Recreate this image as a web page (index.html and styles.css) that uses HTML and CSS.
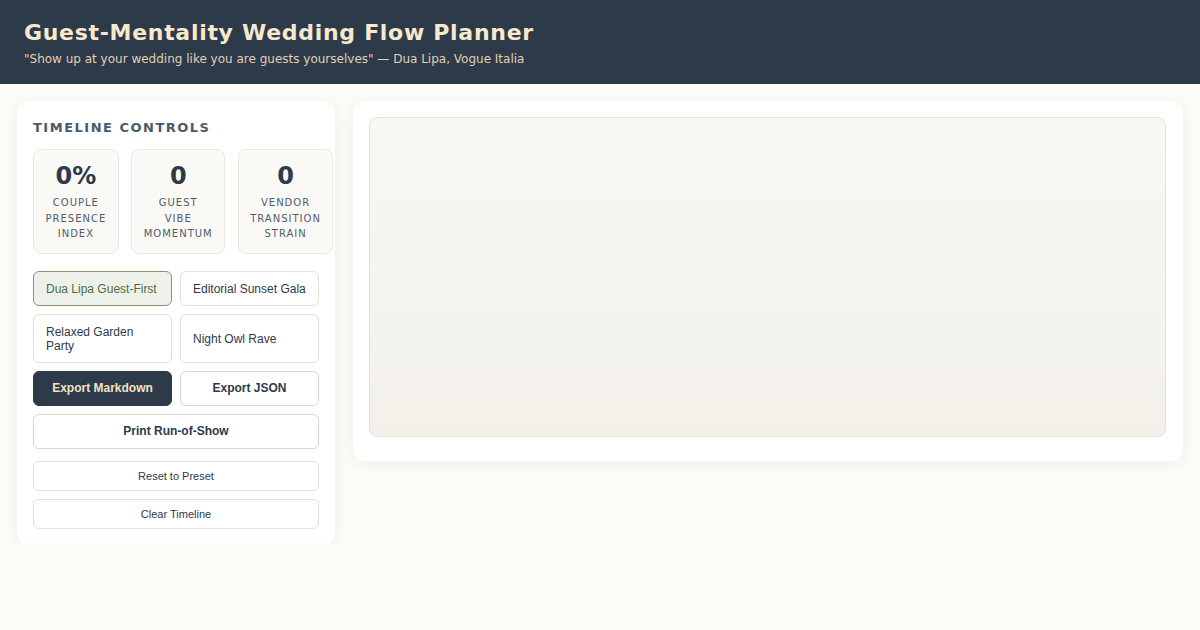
FILE: index.html
```html
<!DOCTYPE html>
<html lang="en">
<head>
<meta charset="utf-8">
<title>Guest-Mentality Wedding Flow Planner</title>
<link rel="stylesheet" href="styles.css">
</head>
<body>
<header class="topbar">
  <h1 class="title">Guest-Mentality Wedding Flow Planner</h1>
  <p class="subtitle">"Show up at your wedding like you are guests yourselves" — Dua Lipa, Vogue Italia</p>
</header>
<div class="layout">
  <aside class="card sidebar">
    <h2 class="section-title">Timeline Controls</h2>
    <div class="stats">
      <div class="stat"><div class="stat-value">0%</div><div class="stat-label">Couple Presence Index</div></div>
      <div class="stat"><div class="stat-value">0</div><div class="stat-label">Guest Vibe Momentum</div></div>
      <div class="stat"><div class="stat-value">0</div><div class="stat-label">Vendor Transition Strain</div></div>
    </div>
    <div class="presets">
      <button class="preset active">Dua Lipa Guest-First</button>
      <button class="preset">Editorial Sunset Gala</button>
      <button class="preset">Relaxed Garden Party</button>
      <button class="preset">Night Owl Rave</button>
    </div>
    <div class="exports">
      <button class="btn btn-dark">Export Markdown</button>
      <button class="btn">Export JSON</button>
    </div>
    <button class="btn btn-wide">Print Run-of-Show</button>
    <div class="minor">
      <button class="btn-small">Reset to Preset</button>
      <button class="btn-small">Clear Timeline</button>
    </div>
  </aside>
  <main class="card mainpanel">
    <div class="canvas"></div>
  </main>
</div>
</body>
</html>
```
FILE: styles.css
```css
* { box-sizing: border-box; }
html, body { margin: 0; padding: 0; }
body {
  background: #fcfbf7;
  font-family: "DejaVu Sans", sans-serif;
  color: #2d3a4a;
}
.topbar {
  background: #2d3a4a;
  padding: 18px 24px 16px;
  height: 84px;
}
.title {
  margin: 0;
  font-size: 22px;
  line-height: 29px;
  font-weight: 700;
  color: #f8e9cc;
  letter-spacing: 0.7px;
}
.subtitle {
  margin: 4px 0 0;
  font-size: 12px;
  line-height: 17px;
  color: #e2d0b0;
}
.layout {
  display: grid;
  grid-template-columns: 318px 1fr;
  gap: 18px;
  align-items: start;
  padding: 17px;
  height: 459px;
  overflow: hidden;
}
.card {
  background: #ffffff;
  border-radius: 12px;
  box-shadow: 0 2px 14px rgba(60, 50, 30, 0.07);
}
.sidebar {
  padding: 16px;
}
.section-title {
  margin: 0;
  padding-top: 1px;
  font-size: 13px;
  line-height: 20px;
  font-weight: 700;
  text-transform: uppercase;
  letter-spacing: 1.5px;
  color: #4a5a6b;
}
.stats {
  display: grid;
  grid-template-columns: repeat(3, 1fr);
  gap: 12.5px;
  margin-top: 11px;
}
.stat {
  background: #faf9f5;
  border: 1px solid #ebe8e2;
  border-radius: 8px;
  padding: 12px 11.5px 11px;
  text-align: center;
}
.stat-value {
  font-size: 24px;
  line-height: 29px;
  font-weight: 700;
  color: #2d3a4a;
}
.stat-label {
  margin-top: 4px;
  font-size: 10px;
  line-height: 15.7px;
  text-transform: uppercase;
  letter-spacing: 1px;
  color: #505c6a;
}
.presets {
  display: grid;
  grid-template-columns: 1fr 1fr;
  gap: 8px;
  margin-top: 17px;
}
button {
  font-family: "Liberation Sans", Arial, sans-serif;
  cursor: pointer;
}
.preset {
  background: #ffffff;
  border: 1px solid #e2dfd9;
  border-radius: 6px;
  padding: 9.5px 12px;
  font-size: 12px;
  line-height: 14px;
  text-align: left;
  color: #2d3a4a;
}
.preset.active {
  background: #edf1ea;
  border-color: #7c9a6e;
  color: #4d6e42;
}
.exports {
  display: grid;
  grid-template-columns: 1fr 1fr;
  gap: 8px;
  margin-top: 8px;
}
.btn {
  background: #ffffff;
  border: 1px solid #d9d6d0;
  border-radius: 6px;
  padding: 10px 12px;
  font-size: 12px;
  line-height: 13px;
  font-weight: 700;
  color: #2d3a4a;
}
.btn-dark {
  background: #2d3a4a;
  border-color: #2d3a4a;
  color: #f3e3c3;
}
.btn-wide {
  display: block;
  width: 100%;
  margin-top: 8px;
}
.minor {
  display: flex;
  flex-direction: column;
  gap: 8px;
  margin-top: 12px;
}
.btn-small {
  background: #ffffff;
  border: 1px solid #e2dfd9;
  border-radius: 6px;
  padding: 8px 12px;
  font-size: 11px;
  line-height: 12px;
  color: #2d3a4a;
}
.mainpanel {
  padding: 16px 17px 24px 16px;
}
.canvas {
  height: 320px;
  border: 1px solid #e4e1db;
  border-radius: 8px;
  background: linear-gradient(180deg, #f8f7f3 0%, #f3f0ea 100%);
}
```
